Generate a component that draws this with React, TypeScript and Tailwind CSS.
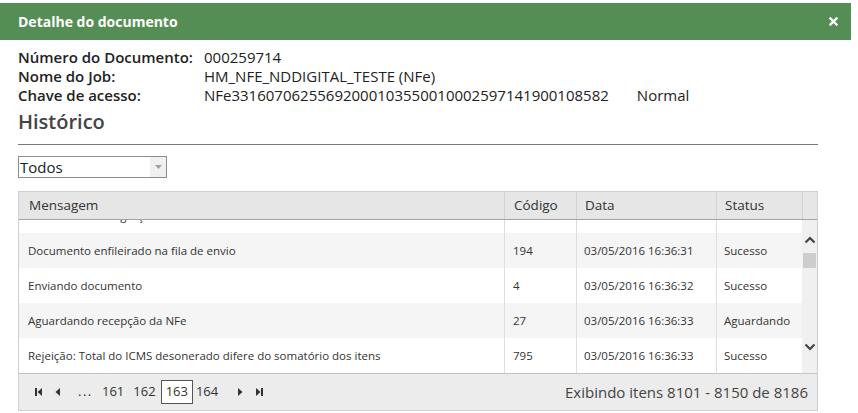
import React from 'react';

const rows = [
  { msg: 'Documento enfileirado na fila de envio', code: '194', date: '03/05/2016 16:36:31', status: 'Sucesso' },
  { msg: 'Enviando documento', code: '4', date: '03/05/2016 16:36:32', status: 'Sucesso' },
  { msg: 'Aguardando recepção da NFe', code: '27', date: '03/05/2016 16:36:33', status: 'Aguardando' },
  { msg: 'Rejeição: Total do ICMS desonerado difere do somatório dos itens', code: '795', date: '03/05/2016 16:36:33', status: 'Sucesso' },
];

const cols = 'grid grid-cols-[485px_72px_140px_86px]';

function First() {
  return (
    <svg width="8" height="8" viewBox="0 0 8 8">
      <rect x="0" y="0" width="2" height="8" fill="#333" />
      <path d="M7 0 L2.5 4 L7 8 Z" fill="#333" />
    </svg>
  );
}

function Prev() {
  return (
    <svg width="6" height="8" viewBox="0 0 6 8">
      <path d="M5 0 L0.5 4 L5 8 Z" fill="#333" />
    </svg>
  );
}

function Next() {
  return (
    <svg width="6" height="8" viewBox="0 0 6 8">
      <path d="M1 0 L5.5 4 L1 8 Z" fill="#333" />
    </svg>
  );
}

function Last() {
  return (
    <svg width="8" height="8" viewBox="0 0 8 8">
      <path d="M1 0 L5.5 4 L1 8 Z" fill="#333" />
      <rect x="6" y="0" width="2" height="8" fill="#333" />
    </svg>
  );
}

function App() {
  return (
    <div className="w-[858px] h-[413px] bg-white text-[#333] overflow-hidden" style={{ fontFamily: '"Open Sans", sans-serif' }}>
      {/* title bar */}
      <div className="mt-[3px] w-[851px] h-[37px] bg-[#558e54] flex items-center justify-between pl-[18px] pr-[13px]">
        <span className="text-white text-[14px] font-bold">Detalhe do documento</span>
        <svg width="9" height="9" viewBox="0 0 9 9">
          <path d="M1.5 1.5 L7.5 7.5 M7.5 1.5 L1.5 7.5" stroke="#fff" strokeWidth="2.4" strokeLinecap="square" />
        </svg>
      </div>

      <div className="px-[18px] w-[836px]">
        {/* document info */}
        <div className="pt-[8px] grid grid-cols-[186px_1fr] text-[15px] leading-[19px] text-[#222]">
          <span className="font-semibold whitespace-nowrap">Número do Documento:</span>
          <span>000259714</span>
          <span className="font-semibold">Nome do Job:</span>
          <span>HM_NFE_NDDIGITAL_TESTE (NFe)</span>
          <span className="font-semibold">Chave de acesso:</span>
          <span className="flex gap-[28px]">
            <span>NFe33160706255692000103550010002597141900108582</span>
            <span>Normal</span>
          </span>
        </div>

        <h2 className="mt-[5px] text-[20px] font-semibold text-[#444] leading-[24px]">Histórico</h2>
        <div className="mt-[10px] border-t border-[#7a7a7a]" />

        {/* filter */}
        <div className="mt-[11px] w-[149px] h-[22px] border border-[#8c8c8c] flex">
          <span className="flex-1 pl-[1px] text-[15px] leading-[20px] text-[#222]">Todos</span>
          <span className="w-[16px] bg-[#f0f0f0] flex items-center justify-center">
            <svg width="7" height="4" viewBox="0 0 7 4">
              <path d="M0 0 L7 0 L3.5 4 Z" fill="#a0a0a0" />
            </svg>
          </span>
        </div>

        {/* table */}
        <div className="mt-[13px] w-[800px] border border-[#cfcfcf]">
          <div className="flex bg-[#e6e6e6] h-[28px] border-b border-[#a3a3a3] text-[13.5px]">
            <div className={cols + ' flex-1'}>
              <div className="pl-[10px] leading-[27px]">Mensagem</div>
              <div className="pl-[9px] leading-[27px] border-l border-[#d2d2d2]">Código</div>
              <div className="pl-[8px] leading-[27px] border-l border-[#d2d2d2]">Data</div>
              <div className="pl-[8px] leading-[27px] border-l border-[#d2d2d2]">Status</div>
            </div>
            <div className="w-[16px] border-l border-[#d2d2d2]" />
          </div>

          <div className="flex h-[153px] overflow-hidden">
            <div className="flex-1 text-[11.5px]">
              <div className={cols + ' h-[13px] overflow-hidden bg-white'}>
                <div className="pl-[9px] h-[13px] overflow-hidden">
                  <div className="leading-[35px] -mt-[22px]">Processando integração</div>
                </div>
                <div className="border-l border-[#dedede]" />
                <div className="border-l border-[#dedede]" />
                <div className="border-l border-[#dedede]" />
              </div>
              {rows.map((r, i) => (
                <div key={i} className={cols + ' h-[35px] leading-[35px] ' + (i % 2 === 0 ? 'bg-[#f5f5f5]' : 'bg-white')}>
                  <div className="pl-[9px] whitespace-nowrap">{r.msg}</div>
                  <div className="pl-[8px] border-l border-[#dedede]">{r.code}</div>
                  <div className="pl-[7px] border-l border-[#dedede]">{r.date}</div>
                  <div className="pl-[7px] border-l border-[#dedede]">{r.status}</div>
                </div>
              ))}
            </div>
            {/* scrollbar */}
            <div className="w-[16px] bg-[#f0f0f0] flex flex-col items-center">
              <svg className="mt-[16px]" width="12" height="8" viewBox="0 0 12 8">
                <path d="M1.5 6.5 L6 2 L10.5 6.5" stroke="#444" strokeWidth="2.2" fill="none" />
              </svg>
              <div className="mt-[9px] w-[13px] h-[15px] bg-[#cdcdcd]" />
              <svg className="mt-[75px]" width="12" height="8" viewBox="0 0 12 8">
                <path d="M1.5 1.5 L6 6 L10.5 1.5" stroke="#444" strokeWidth="2.2" fill="none" />
              </svg>
            </div>
          </div>

          {/* pager */}
          <div className="h-[37px] border-t border-[#c4c4c4] bg-[#ececec] flex items-center justify-between pl-[16px] pr-[9px]">
            <div className="flex items-center text-[13px] text-[#333]">
              <span className="w-[20px] flex"><First /></span>
              <span className="w-[23px] flex"><Prev /></span>
              <span className="w-[21px] tracking-[1.5px]">...</span>
              <span className="px-[3px] py-[1px]">161</span>
              <span className="ml-[3px] px-[3px] py-[1px]">162</span>
              <span className="ml-[2px] px-[4px] py-[1px] border border-[#555] bg-white">163</span>
              <span className="px-[3px] py-[1px]">164</span>
              <span className="ml-[16px] w-[18px] flex"><Next /></span>
              <span className="flex"><Last /></span>
            </div>
            <span className="text-[15px] text-[#444]">Exibindo itens 8101 - 8150 de 8186</span>
          </div>
        </div>
      </div>
    </div>
  );
}

export default App;
